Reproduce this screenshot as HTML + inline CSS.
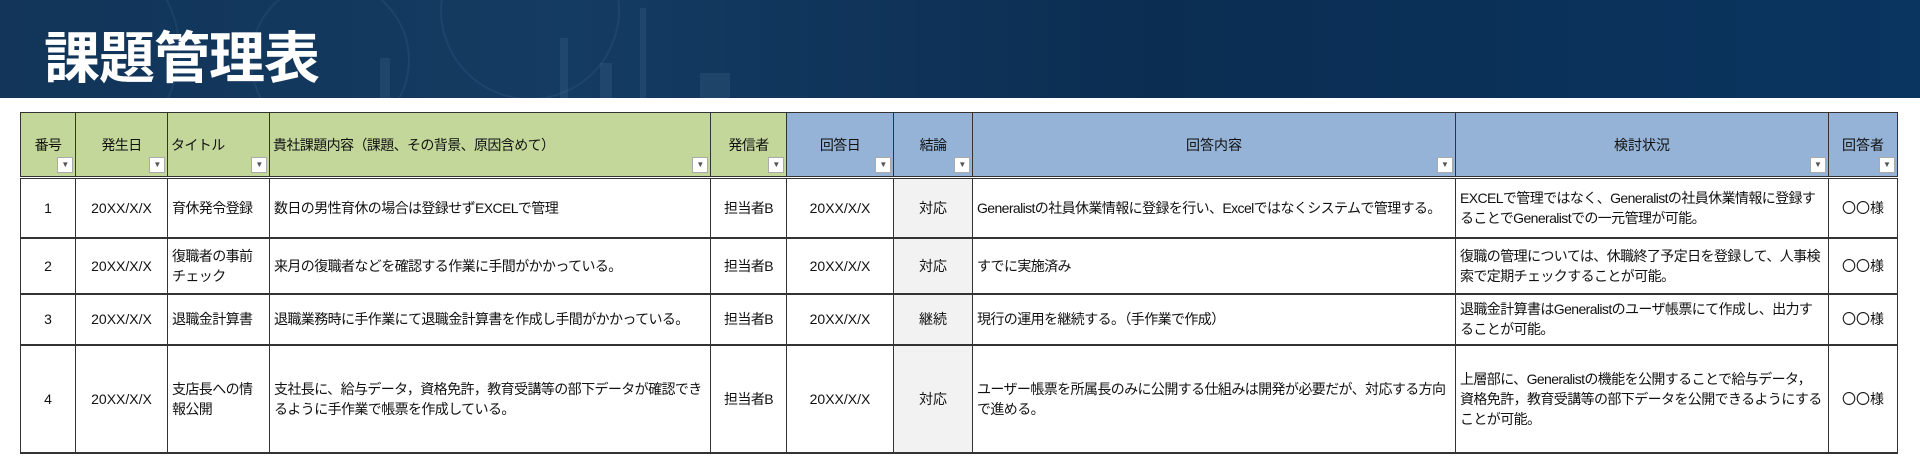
<!DOCTYPE html>
<html><head><meta charset="utf-8"><style>
*{margin:0;padding:0;box-sizing:border-box}
body{width:1920px;height:474px;background:#fff;position:relative;overflow:hidden;font-family:"Liberation Sans","Noto Sans CJK JP",sans-serif;color:#111}
#ban{position:absolute;left:0;top:0;width:1920px;height:98px;background:linear-gradient(90deg,#123559 0%,#143b62 30%,#0b2d52 60%,#0a3560 100%);overflow:hidden}
#ban .c{position:absolute;border-radius:50%;border:2px solid rgba(150,190,230,.08)}
#ban .b{position:absolute;bottom:0;background:rgba(160,200,235,.09)}
#title{position:absolute;left:44px;top:14px;font-size:56px;font-weight:bold;color:#fff;letter-spacing:-1px;font-family:"Noto Sans CJK JP",sans-serif}
table{position:absolute;left:20px;top:112px;border-collapse:collapse;table-layout:fixed;font-size:14px}
td{border:1px solid #333;vertical-align:middle;padding:0 4px;line-height:20px;position:relative}
th{border:1px solid #333;font-weight:normal;position:relative;height:65px;font-size:14px;vertical-align:middle;padding:0 3px}
th.g{background:#c4d79b}th.bl{background:#95b3d7}
th .f{position:absolute;right:2px;bottom:3px;width:16px;height:16px;background:#fff;border:1px solid #aaa;font-size:8px;line-height:14px;text-align:center;color:#555}
tr.h{border-bottom:3px double #333}
tr.r td{border-top:2px solid #333}
.c{text-align:center}.gr{background:#f2f2f2}
.cd{letter-spacing:-0.6px}
</style></head><body>
<div id="ban">
<div class="c" style="left:-40px;top:-60px;width:220px;height:220px"></div>
<div class="c" style="left:440px;top:-80px;width:180px;height:180px"></div>
<div class="c" style="left:250px;top:-20px;width:160px;height:160px"></div>
<div class="b" style="left:380px;width:10px;height:40px"></div>
<div class="b" style="left:560px;width:8px;height:60px"></div>
<div class="b" style="left:640px;width:6px;height:90px"></div>
<div class="b" style="left:600px;width:12px;height:35px"></div>
<div class="b" style="left:700px;width:30px;height:25px"></div>
<div id="title">課題管理表</div>
</div>
<table>
<colgroup><col style="width:55px"><col style="width:92px"><col style="width:102px"><col style="width:441px"><col style="width:76px"><col style="width:107px"><col style="width:79px"><col style="width:483px"><col style="width:373px"><col style="width:69px"></colgroup>
<tr class="h">
<th class="g cd">番号<span class="f">▼</span></th>
<th class="g cd">発生日<span class="f">▼</span></th>
<th class="g cd" style="text-align:left">タイトル<span class="f">▼</span></th>
<th class="g cd" style="text-align:left">貴社課題内容（課題、その背景、原因含めて）<span class="f">▼</span></th>
<th class="g cd">発信者<span class="f">▼</span></th>
<th class="bl cd">回答日<span class="f">▼</span></th>
<th class="bl cd">結論<span class="f">▼</span></th>
<th class="bl">回答内容<span class="f">▼</span></th>
<th class="bl">検討状況<span class="f">▼</span></th>
<th class="bl">回答者<span class="f">▼</span></th>
</tr>
<tr class="r" style="height:60px"><td class="c">1</td><td class="c">20XX/X/X</td><td class="cd">育休発令登録</td><td class="cd">数日の男性育休の場合は登録せずEXCELで管理</td><td class="c cd">担当者B</td><td class="c">20XX/X/X</td><td class="c gr">対応</td><td class="cd">Generalistの社員休業情報に登録を行い、Excelではなくシステムで管理する。</td><td class="cd">EXCELで管理ではなく、Generalistの社員休業情報に登録することでGeneralistでの一元管理が可能。</td><td class="c">〇〇様</td></tr>
<tr class="r" style="height:56px"><td class="c">2</td><td class="c">20XX/X/X</td><td class="cd">復職者の事前チェック</td><td class="cd">来月の復職者などを確認する作業に手間がかかっている。</td><td class="c cd">担当者B</td><td class="c">20XX/X/X</td><td class="c gr">対応</td><td class="cd">すでに実施済み</td><td class="cd">復職の管理については、休職終了予定日を登録して、人事検索で定期チェックすることが可能。</td><td class="c">〇〇様</td></tr>
<tr class="r" style="height:51px"><td class="c">3</td><td class="c">20XX/X/X</td><td class="cd">退職金計算書</td><td class="cd">退職業務時に手作業にて退職金計算書を作成し手間がかかっている。</td><td class="c cd">担当者B</td><td class="c">20XX/X/X</td><td class="c gr">継続</td><td class="cd">現行の運用を継続する。（手作業で作成）</td><td class="cd">退職金計算書はGeneralistのユーザ帳票にて作成し、出力することが可能。</td><td class="c">〇〇様</td></tr>
<tr class="r" style="height:108px;border-bottom:2px solid #333"><td class="c">4</td><td class="c">20XX/X/X</td><td class="cd">支店長への情報公開</td><td class="cd">支社長に、給与データ，資格免許，教育受講等の部下データが確認できるように手作業で帳票を作成している。</td><td class="c cd">担当者B</td><td class="c">20XX/X/X</td><td class="c gr">対応</td><td class="cd">ユーザー帳票を所属長のみに公開する仕組みは開発が必要だが、対応する方向で進める。</td><td class="cd">上層部に、Generalistの機能を公開することで給与データ，資格免許，教育受講等の部下データを公開できるようにすることが可能。</td><td class="c">〇〇様</td></tr>
</table>
</body></html>
